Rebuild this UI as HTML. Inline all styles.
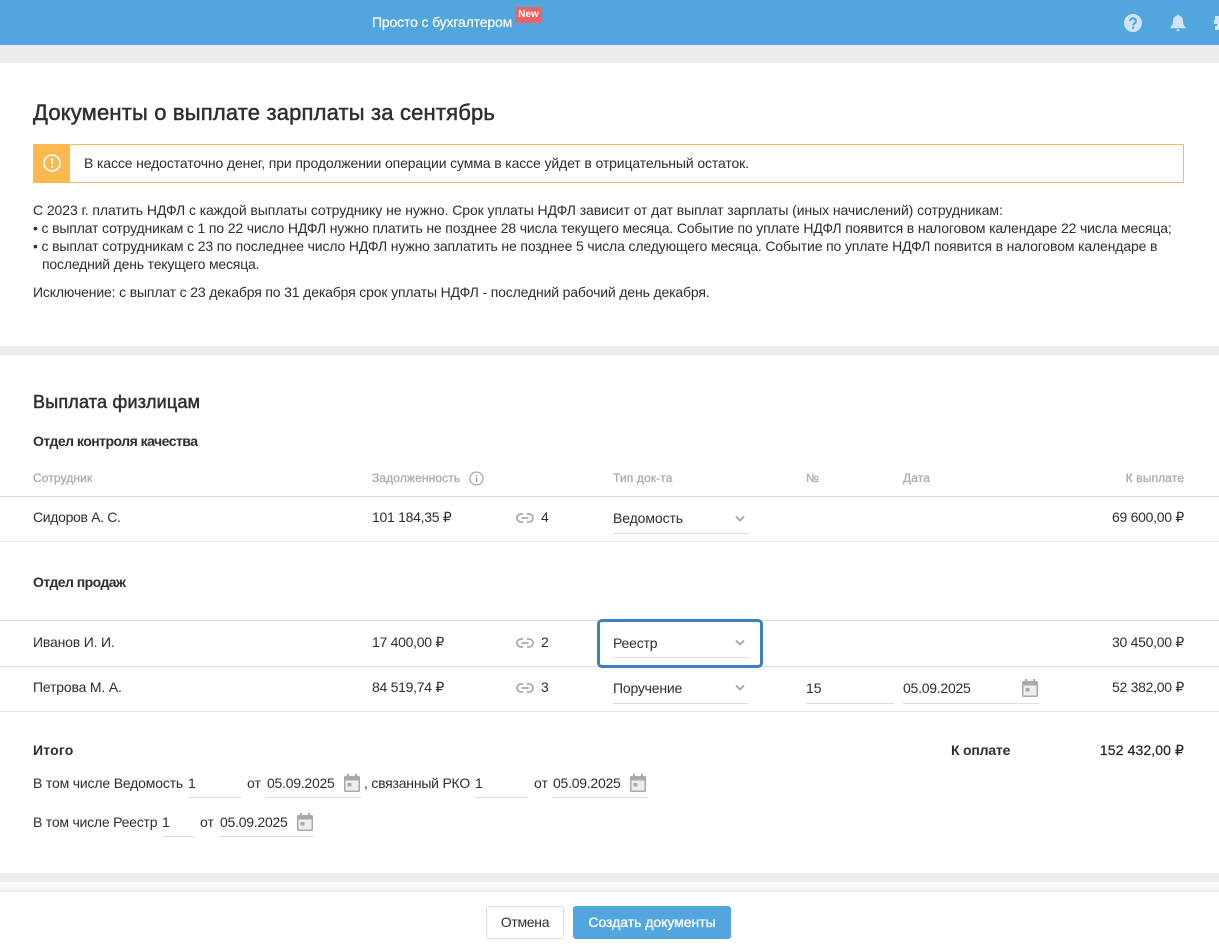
<!DOCTYPE html>
<html lang="ru"><head><meta charset="utf-8"><title>Документы о выплате зарплаты</title>
<style>
html,body{margin:0;padding:0}
body{width:1219px;height:944px;overflow:hidden;position:relative;background:#fff;font-family:"Liberation Sans",Arial,sans-serif;font-size:14px;color:#2e2e2e}
.t{position:absolute;white-space:nowrap;line-height:20px;height:20px}
.r{text-align:right}
.b{position:absolute;background:#e5e5e5;height:1px}
.u{position:absolute;background:#ddd;height:1px}
.g{color:#adadad;font-size:12px;-webkit-text-stroke:.35px #adadad;letter-spacing:.12px}
.m{-webkit-text-stroke:.5px #333}
svg{position:absolute;display:block}
.band{position:absolute;left:0;width:1219px;background:#ebeef1}
</style></head><body>

<div style="position:absolute;left:0;top:0;width:1219px;height:45px;background:#52a6dd"></div>
<div class="t" style="left:372px;top:12px;color:#fff;letter-spacing:-.15px;-webkit-text-stroke:.15px #fff">Просто с бухгалтером</div>
<div style="position:absolute;left:515px;top:7px;width:27px;height:16px;background:#ea6464;border-radius:2px;color:#fff;font-size:10px;font-weight:bold;line-height:15px;text-align:center">New</div>
<svg style="left:1124px;top:14px" width="18" height="18" viewBox="0 0 18 18"><circle cx="9" cy="9" r="9" fill="#cfe5f6"/><path d="M6.200 7.200a2.800 2.800 0 1 1 4.400 2.200c-.9.6-1.400 1-1.400 2" fill="none" stroke="#52a6dd" stroke-width="2"/><rect x="8" y="12.600" width="2.200" height="2.200" fill="#52a6dd"/></svg>
<svg style="left:1170px;top:14px" width="16" height="18" viewBox="0 0 16 18"><path d="M8 .5c.8 0 1.200.5 1.200 1.200 2.800.6 3.800 2.800 3.800 5.200 0 3 .6 4.600 2.500 6.100v1.300H.5V13c1.900-1.500 2.500-3.100 2.500-6.100 0-2.400 1-4.600 3.800-5.200C6.800 1 7.200.5 8 .5z" fill="#cfe5f6"/><rect x="6.500" y="15.300" width="3" height="2" rx="1" fill="#cfe5f6"/></svg>
<svg style="left:1214px;top:15px" width="5" height="16" viewBox="0 0 5 16"><path d="M1 1h4v14H1v-4h2V9H0V5h1z" fill="#cfe5f6"/></svg>

<div class="band" style="top:45px;height:18px"></div>

<div class="t m" style="left:33px;top:100px;font-size:22px;line-height:26px;height:26px;letter-spacing:.17px">Документы о выплате зарплаты за сентябрь</div>

<div style="position:absolute;left:33px;top:144px;width:1151px;height:39px;box-sizing:border-box;border:1px solid #f2bb5c"></div>
<div style="position:absolute;left:33px;top:144px;width:37px;height:39px;background:#fdb94f"></div>
<svg style="left:42px;top:153px" width="20" height="20" viewBox="0 0 20 20"><circle cx="10" cy="10" r="8" fill="none" stroke="#fff" stroke-width="1.600"/><rect x="9.100" y="5" width="1.800" height="6.500" fill="#fff"/><rect x="9.100" y="13" width="1.800" height="1.900" fill="#fff"/></svg>
<div class="t" style="left:84px;top:153px;letter-spacing:-.12px">В кассе недостаточно денег, при продолжении операции сумма в кассе уйдет в отрицательный остаток.</div>

<div class="t" style="left:33px;top:200px;letter-spacing:-.08px">С 2023 г. платить НДФЛ с каждой выплаты сотруднику не нужно. Срок уплаты НДФЛ зависит от дат выплат зарплаты (иных начислений) сотрудникам:</div>
<div class="t" style="left:33px;top:218px;letter-spacing:-.15px">• с выплат сотрудникам с 1 по 22 число НДФЛ нужно платить не позднее 28 числа текущего месяца. Событие по уплате НДФЛ появится в налоговом календаре 22 числа месяца;</div>
<div class="t" style="left:33px;top:236px;letter-spacing:-.14px">• с выплат сотрудникам с 23 по последнее число НДФЛ нужно заплатить не позднее 5 числа следующего месяца. Событие по уплате НДФЛ появится в налоговом календаре в</div>
<div class="t" style="left:42px;top:254px;letter-spacing:-.18px">последний день текущего месяца.</div>
<div class="t" style="left:33px;top:282px;letter-spacing:-.15px">Исключение: с выплат с 23 декабря по 31 декабря срок уплаты НДФЛ - последний рабочий день декабря.</div>

<div class="band" style="top:346px;height:9px"></div>

<div class="t m" style="left:33px;top:391px;font-size:18px;line-height:22px;height:22px;letter-spacing:.2px">Выплата физлицам</div>
<div class="t" style="left:33px;top:431px;font-weight:bold;letter-spacing:-.52px">Отдел контроля качества</div>

<div class="t g" style="left:33px;top:468px">Сотрудник</div>
<div class="t g" style="left:372px;top:468px">Задолженность</div>
<svg style="left:469px;top:471px" width="15" height="15" viewBox="0 0 15 15"><circle cx="7.500" cy="7.500" r="6.500" fill="none" stroke="#999" stroke-width="1.100"/><rect x="6.900" y="6.500" width="1.300" height="4.500" fill="#999"/><rect x="6.900" y="4" width="1.300" height="1.400" fill="#999"/></svg>
<div class="t g" style="left:613px;top:468px">Тип док-та</div>
<div class="t g" style="left:806px;top:468px">№</div>
<div class="t g" style="left:903px;top:468px">Дата</div>
<div class="t g r" style="left:1034px;width:150px;top:468px">К выплате</div>
<div class="b" style="left:0;top:496px;width:1219px;background:#ddd"></div>

<div class="t" style="left:33px;top:507px;letter-spacing:-.33px">Сидоров А. С.</div>
<div class="t" style="left:372px;top:507px;letter-spacing:-.28px">101 184,35 ₽</div>
<svg style="left:516px;top:512px" width="18" height="12" viewBox="0 0 18 12"><path d="M7 2H5a4 4 0 0 0 0 8h2M11 2h2a4 4 0 0 1 0 8h-2M5.500 6h7" fill="none" stroke="#aaa" stroke-width="1.800"/></svg>
<div class="t" style="left:541px;top:507px">4</div>
<div class="t" style="left:613px;top:508px;letter-spacing:-.1px">Ведомость</div>
<svg style="left:734px;top:515px" width="12" height="8" viewBox="0 0 12 8"><path d="M2 1.500L6 5.500l4-4" fill="none" stroke="#aaa" stroke-width="2"/></svg>
<div class="u" style="left:613px;top:533px;width:136px"></div>
<div class="t r" style="left:1034px;width:150px;top:507px;letter-spacing:-.28px">69 600,00 ₽</div>
<div class="b" style="left:0;top:541px;width:1219px"></div>

<div class="t" style="left:33px;top:572px;font-weight:bold;letter-spacing:-.55px">Отдел продаж</div>
<div class="b" style="left:0;top:620px;width:1219px;background:#ddd"></div>

<div class="t" style="left:33px;top:632px;letter-spacing:-.18px">Иванов И. И.</div>
<div class="t" style="left:372px;top:632px;letter-spacing:-.28px">17 400,00 ₽</div>
<svg style="left:516px;top:637px" width="18" height="12" viewBox="0 0 18 12"><path d="M7 2H5a4 4 0 0 0 0 8h2M11 2h2a4 4 0 0 1 0 8h-2M5.500 6h7" fill="none" stroke="#aaa" stroke-width="1.800"/></svg>
<div class="t" style="left:541px;top:632px">2</div>
<div class="b" style="left:0;top:666px;width:1219px;background:#ddd"></div>
<div style="position:absolute;left:597px;top:619px;width:166px;height:49px;box-sizing:border-box;border:3px solid #3d7fc0;border-radius:5px;background:#fff"></div>
<div class="t" style="left:613px;top:633px;letter-spacing:-.2px">Реестр</div>
<svg style="left:734px;top:639px" width="12" height="8" viewBox="0 0 12 8"><path d="M2 1.500L6 5.500l4-4" fill="none" stroke="#aaa" stroke-width="2"/></svg>
<div class="u" style="left:613px;top:657px;width:136px"></div>
<div class="t r" style="left:1034px;width:150px;top:632px;letter-spacing:-.28px">30 450,00 ₽</div>

<div class="t" style="left:33px;top:677px;letter-spacing:-.18px">Петрова М. А.</div>
<div class="t" style="left:372px;top:677px;letter-spacing:-.28px">84 519,74 ₽</div>
<svg style="left:516px;top:682px" width="18" height="12" viewBox="0 0 18 12"><path d="M7 2H5a4 4 0 0 0 0 8h2M11 2h2a4 4 0 0 1 0 8h-2M5.500 6h7" fill="none" stroke="#aaa" stroke-width="1.800"/></svg>
<div class="t" style="left:541px;top:677px">3</div>
<div class="t" style="left:613px;top:678px;letter-spacing:-.2px">Поручение</div>
<svg style="left:734px;top:684px" width="12" height="8" viewBox="0 0 12 8"><path d="M2 1.500L6 5.500l4-4" fill="none" stroke="#aaa" stroke-width="2"/></svg>
<div class="u" style="left:613px;top:703px;width:136px"></div>
<div class="t" style="left:806px;top:678px">15</div>
<div class="u" style="left:806px;top:703px;width:88px"></div>
<div class="t" style="left:903px;top:678px;letter-spacing:-.25px">05.09.2025</div>
<div class="u" style="left:903px;top:703px;width:136px"></div>
<svg style="left:1022px;top:679px" width="16" height="18" viewBox="0 0 16 18"><rect x="1" y="6" width="14" height="11" fill="#eee"/><path d="M3 0h2v2h6V0h2v2h1.500A1.500 1.500 0 0 1 16 3.500v13a1.500 1.500 0 0 1-1.500 1.500h-13A1.500 1.500 0 0 1 0 16.500v-13A1.500 1.500 0 0 1 1.500 2H3zM1.500 6.500v10h13v-10z" fill="#a9a9a9"/><rect x="3.500" y="9" width="4" height="3.500" fill="#a9a9a9"/></svg>
<div class="t r" style="left:1034px;width:150px;top:677px;letter-spacing:-.28px">52 382,00 ₽</div>
<div class="b" style="left:0;top:711px;width:1219px"></div>

<div class="t" style="left:33px;top:740px;font-weight:bold;letter-spacing:.2px">Итого</div>
<div class="t" style="left:951px;top:740px;font-weight:bold;letter-spacing:-.2px">К оплате</div>
<div class="t r" style="left:1034px;width:150px;top:740px;letter-spacing:.1px;-webkit-text-stroke:.2px #222;color:#222">152 432,00 ₽</div>

<div class="t" style="left:33px;top:773px;letter-spacing:-.17px">В том числе Ведомость</div>
<div class="t" style="left:188px;top:773px">1</div>
<div class="u" style="left:188px;top:797px;width:53px"></div>
<div class="t" style="left:247px;top:773px">от</div>
<div class="t" style="left:267px;top:773px;letter-spacing:-.25px">05.09.2025</div>
<div class="u" style="left:266px;top:797px;width:95px"></div>
<svg style="left:344px;top:774px" width="16" height="18" viewBox="0 0 16 18"><rect x="1" y="6" width="14" height="11" fill="#eee"/><path d="M3 0h2v2h6V0h2v2h1.500A1.500 1.500 0 0 1 16 3.500v13a1.500 1.500 0 0 1-1.500 1.500h-13A1.500 1.500 0 0 1 0 16.500v-13A1.500 1.500 0 0 1 1.500 2H3zM1.500 6.500v10h13v-10z" fill="#a9a9a9"/><rect x="3.500" y="9" width="4" height="3.500" fill="#a9a9a9"/></svg>
<div class="t" style="left:364px;top:773px;letter-spacing:-.22px">, связанный РКО</div>
<div class="t" style="left:475px;top:773px">1</div>
<div class="u" style="left:475px;top:797px;width:53px"></div>
<div class="t" style="left:534px;top:773px">от</div>
<div class="t" style="left:553px;top:773px;letter-spacing:-.25px">05.09.2025</div>
<div class="u" style="left:553px;top:797px;width:94px"></div>
<svg style="left:630px;top:774px" width="16" height="18" viewBox="0 0 16 18"><rect x="1" y="6" width="14" height="11" fill="#eee"/><path d="M3 0h2v2h6V0h2v2h1.500A1.500 1.500 0 0 1 16 3.500v13a1.500 1.500 0 0 1-1.500 1.500h-13A1.500 1.500 0 0 1 0 16.500v-13A1.500 1.500 0 0 1 1.500 2H3zM1.500 6.500v10h13v-10z" fill="#a9a9a9"/><rect x="3.500" y="9" width="4" height="3.500" fill="#a9a9a9"/></svg>

<div class="t" style="left:33px;top:812px;letter-spacing:-.22px">В том числе Реестр</div>
<div class="t" style="left:162px;top:812px">1</div>
<div class="u" style="left:162px;top:836px;width:33px"></div>
<div class="t" style="left:200px;top:812px">от</div>
<div class="t" style="left:220px;top:812px;letter-spacing:-.25px">05.09.2025</div>
<div class="u" style="left:219px;top:836px;width:95px"></div>
<svg style="left:297px;top:813px" width="16" height="18" viewBox="0 0 16 18"><rect x="1" y="6" width="14" height="11" fill="#eee"/><path d="M3 0h2v2h6V0h2v2h1.500A1.500 1.500 0 0 1 16 3.500v13a1.500 1.500 0 0 1-1.500 1.500h-13A1.500 1.500 0 0 1 0 16.500v-13A1.500 1.500 0 0 1 1.500 2H3zM1.500 6.500v10h13v-10z" fill="#a9a9a9"/><rect x="3.500" y="9" width="4" height="3.500" fill="#a9a9a9"/></svg>

<div class="band" style="top:873px;height:9px"></div>
<div style="position:absolute;left:0;top:882px;width:1219px;height:10px;background:linear-gradient(#fff,#eeeeee)"></div>
<div style="position:absolute;left:0;top:892px;width:1219px;height:52px;background:#fff"></div>
<div style="position:absolute;left:486px;top:906px;width:78px;height:33px;box-sizing:border-box;border:1px solid #ddd;border-radius:3px;background:#fff;text-align:center;line-height:31px;letter-spacing:-.3px">Отмена</div>
<div style="position:absolute;left:573px;top:906px;width:158px;height:33px;background:#52a6dd;border-radius:3px;color:#fff;text-align:center;line-height:33px;letter-spacing:-.03px;-webkit-text-stroke:.3px #fff">Создать документы</div>
</body></html>
